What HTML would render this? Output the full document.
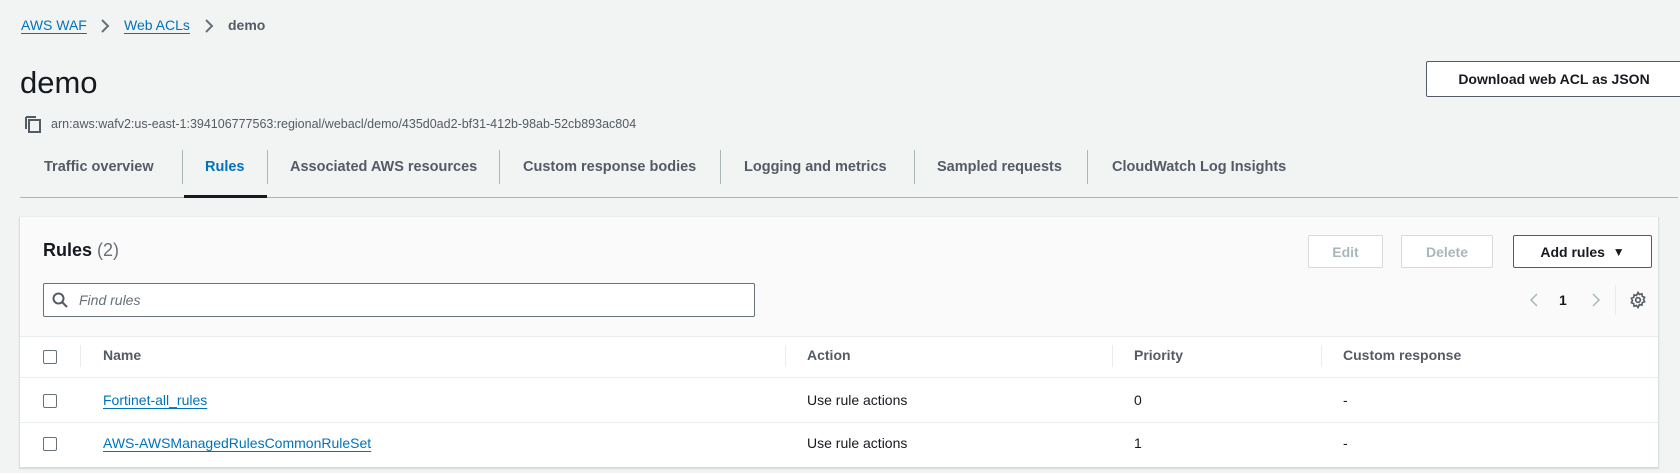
<!DOCTYPE html>
<html><head><meta charset="utf-8"><style>
*{box-sizing:border-box;margin:0;padding:0}
body{width:1680px;height:473px;background:#f2f3f3;font-family:"Liberation Sans",sans-serif;color:#16191f;position:relative;overflow:hidden;font-size:14px}
.a{position:absolute;white-space:nowrap}
.lnk{color:#0073bb;text-decoration:underline;text-underline-offset:3px}
.tab{position:absolute;top:159px;font-weight:bold;color:#545b64;font-size:14.5px}
.sep{position:absolute;top:150px;width:1px;height:34px;background:#aab7b8}
.btn{position:absolute;border:1px solid #545b64;border-radius:2px;background:#fff;font-weight:bold;font-size:14px;display:flex;align-items:center;justify-content:center;color:#545b64}
.dis{border-color:#d5dbdb;color:#aab7b8}
.cb{position:absolute;width:14px;height:14px;border:1px solid #687078;border-radius:2px;background:#fff}
.hline{position:absolute;left:20px;width:1638px;height:1px;background:#eaeded}
.th{position:absolute;top:347px;font-weight:bold;color:#545b64}
.vd{position:absolute;top:345px;width:1px;height:22px;background:#eaeded}
</style></head><body>
<div class="a lnk" style="left:21px;top:17px">AWS WAF</div>
<svg class="a" style="left:100px;top:18px" width="10" height="16"><path d="M2 2l6 6-6 6" stroke="#687078" stroke-width="2" fill="none"/></svg>
<div class="a lnk" style="left:124px;top:17px">Web ACLs</div>
<svg class="a" style="left:204px;top:18px" width="10" height="16"><path d="M2 2l6 6-6 6" stroke="#687078" stroke-width="2" fill="none"/></svg>
<div class="a" style="left:228px;top:17px;color:#545b64;font-weight:bold">demo</div>
<div class="a" style="left:20px;top:65px;font-size:31px">demo</div>
<div class="btn" style="left:1426px;top:61px;width:256px;height:36px;color:#16191f">Download web ACL as JSON</div>
<svg class="a" style="left:24px;top:116px" width="18" height="18"><path d="M2 1v12" stroke="#545b64" stroke-width="2"/><rect x="5" y="4" width="11" height="12" fill="none" stroke="#545b64" stroke-width="2"/><path d="M2 1h10" stroke="#545b64" stroke-width="2"/></svg>
<div class="a" style="left:51px;top:117px;font-size:12.5px;color:#545b64">arn:aws:wafv2:us-east-1:394106777563:regional/webacl/demo/435d0ad2-bf31-412b-98ab-52cb893ac804</div>
<div class="tab" style="left:44px">Traffic overview</div>
<div class="sep" style="left:182px"></div>
<div class="tab" style="left:205px;color:#0073bb">Rules</div>
<div class="sep" style="left:267px"></div>
<div class="tab" style="left:290px">Associated AWS resources</div>
<div class="sep" style="left:499px"></div>
<div class="tab" style="left:523px">Custom response bodies</div>
<div class="sep" style="left:720px"></div>
<div class="tab" style="left:744px">Logging and metrics</div>
<div class="sep" style="left:914px"></div>
<div class="tab" style="left:937px">Sampled requests</div>
<div class="sep" style="left:1087px"></div>
<div class="tab" style="left:1112px">CloudWatch Log Insights</div>
<div class="a" style="left:20px;top:197px;width:1658px;height:1px;background:#aab7b8"></div>
<div class="a" style="left:184px;top:195px;width:83px;height:3px;background:#16191f"></div>
<div class="a" style="left:20px;top:217px;width:1638px;height:250px;background:#fff;box-shadow:0 1px 1px 1px #d5dbdb"></div>
<div class="a" style="left:20px;top:217px;width:1638px;height:119px;background:#fafafa"></div>
<div class="a" style="left:43px;top:240px;font-size:18px;font-weight:bold">Rules <span style="font-weight:normal;color:#687078">(2)</span></div>
<div class="btn dis" style="left:1308px;top:235px;width:75px;height:33px">Edit</div>
<div class="btn dis" style="left:1401px;top:235px;width:92px;height:33px">Delete</div>
<div class="btn" style="left:1513px;top:235px;width:139px;height:33px;color:#16191f">Add rules&nbsp;&nbsp;<span style="font-size:12px">▼</span></div>
<div class="a" style="left:43px;top:283px;width:712px;height:34px;border:1px solid #687078;border-radius:2px;background:#fff"></div>
<svg class="a" style="left:52px;top:292px" width="16" height="16"><circle cx="6.5" cy="6.5" r="5" stroke="#545b64" stroke-width="2" fill="none"/><path d="M10 10l5 5" stroke="#545b64" stroke-width="2"/></svg>
<div class="a" style="left:79px;top:292px;font-style:italic;color:#687078">Find rules</div>
<svg class="a" style="left:1528px;top:292px" width="12" height="16"><path d="M9 2L3 8l6 6" stroke="#aab7b8" stroke-width="1.5" fill="none"/></svg>
<div class="a" style="left:1559px;top:292px;font-weight:bold">1</div>
<svg class="a" style="left:1590px;top:292px" width="12" height="16"><path d="M3 2l6 6-6 6" stroke="#aab7b8" stroke-width="1.5" fill="none"/></svg>
<div class="a" style="left:1615px;top:285px;width:1px;height:30px;background:#eaeded"></div>
<svg class="a" style="left:1629px;top:291px" width="18" height="18" viewBox="0 0 18 18"><path d="M9 1.5l1.5 2 2.4-.7.4 2.5 2.3 1-1.1 2.2 1.1 2.2-2.3 1-.4 2.5-2.4-.7L9 16.5l-1.5-2-2.4.7-.4-2.5-2.3-1L3.5 9.5 2.4 7.3l2.3-1 .4-2.5 2.4.7z" fill="none" stroke="#545b64" stroke-width="1.6"/><circle cx="9" cy="9" r="2.3" fill="none" stroke="#545b64" stroke-width="1.6"/></svg>
<div class="hline" style="top:336px"></div>
<div class="cb" style="left:43px;top:350px"></div>
<div class="vd" style="left:80px"></div>
<div class="th" style="left:103px">Name</div>
<div class="vd" style="left:785px"></div>
<div class="th" style="left:807px">Action</div>
<div class="vd" style="left:1112px"></div>
<div class="th" style="left:1134px">Priority</div>
<div class="vd" style="left:1321px"></div>
<div class="th" style="left:1343px">Custom response</div>
<div class="hline" style="top:377px"></div>
<div class="cb" style="left:43px;top:394px"></div>
<div class="a lnk" style="left:103px;top:392px">Fortinet-all_rules</div>
<div class="a" style="left:807px;top:392px">Use rule actions</div>
<div class="a" style="left:1134px;top:392px">0</div>
<div class="a" style="left:1343px;top:392px">-</div>
<div class="hline" style="top:422px"></div>
<div class="cb" style="left:43px;top:437px"></div>
<div class="a lnk" style="left:103px;top:435px">AWS-AWSManagedRulesCommonRuleSet</div>
<div class="a" style="left:807px;top:435px">Use rule actions</div>
<div class="a" style="left:1134px;top:435px">1</div>
<div class="a" style="left:1343px;top:435px">-</div>
</body></html>
